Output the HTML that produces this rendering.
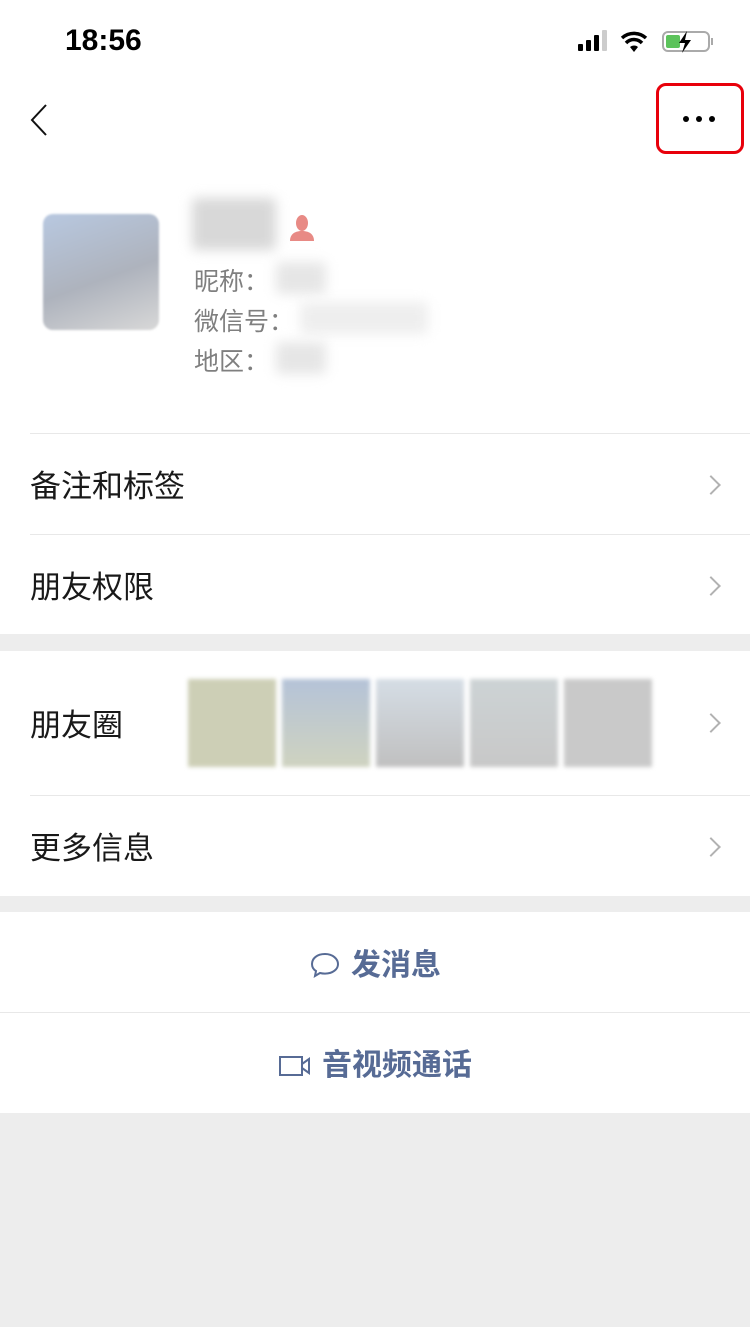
<!DOCTYPE html>
<html><head><meta charset="utf-8"><style>
*{margin:0;padding:0;box-sizing:border-box}
body{width:750px;height:1327px;background:#ededed;font-family:"Liberation Sans","Noto Sans CJK SC",sans-serif;position:relative;overflow:hidden}
.w{position:absolute;left:0;width:750px;background:#fff}
.t{position:absolute;font-size:31px;color:#191919;left:30px}
.chev{position:absolute;right:32px;width:14px;height:14px;border-top:2px solid #b2b2b2;border-right:2px solid #b2b2b2;transform:rotate(45deg)}
.line{position:absolute;left:30px;right:0;height:1px;background:#e8e8e8}
.g{position:absolute;font-size:25px;color:#7f7f7f;left:194px}
.blur{position:absolute;background:#e6e6e6;filter:blur(6px);border-radius:4px}
.ph{position:absolute;top:679px;width:88px;height:88px;filter:blur(2px)}
.b{position:absolute;left:0;width:750px;text-align:center;font-size:30px;font-weight:bold;color:#576b95}
</style></head><body>
<div class="w" style="top:0;height:634px"></div>
<div style="position:absolute;left:65px;top:24px;font-size:30px;font-weight:bold;color:#000">18:56</div>
<svg style="position:absolute;left:578px;top:30px" width="136" height="24">
<rect x="0" y="14" width="5" height="7" rx="1"/><rect x="8" y="10" width="5" height="11" rx="1"/><rect x="16" y="5" width="5" height="16" rx="1"/><rect x="24" y="0" width="5" height="21" rx="1" fill="#ccc"/>
<path d="M44 8a18 18 0 0 1 24 0M48 13a11 11 0 0 1 16 0" stroke="#000" stroke-width="3.5" fill="none"/><path d="M52 17l4 5 4-5a6 6 0 0 0-8 0z"/>
<rect x="85" y="2" width="46" height="19" rx="5" fill="none" stroke="#aaa" stroke-width="2"/><rect x="88" y="5" width="14" height="13" rx="2" fill="#5cc35b"/><path d="M109 1l-8 12h6l-3 10 9-13h-6z"/><rect x="133" y="8" width="2" height="7" fill="#aaa"/>
</svg>
<svg style="position:absolute;left:28px;top:103px" width="22" height="34"><path d="M18 2L4 17l14 15" stroke="#111" stroke-width="2" fill="none"/></svg>
<div style="position:absolute;left:656px;top:83px;width:88px;height:71px;border:3px solid #e8000b;border-radius:10px"></div>
<svg style="position:absolute;left:682px;top:114px" width="36" height="10"><circle cx="4" cy="5" r="3"/><circle cx="17" cy="5" r="3"/><circle cx="30" cy="5" r="3"/></svg>
<div style="position:absolute;left:43px;top:214px;width:116px;height:116px;border-radius:10px;background:linear-gradient(160deg,#b8c8e0,#aeb3bd 55%,#d8d8d8);filter:blur(1px)"></div>
<div class="blur" style="left:192px;top:198px;width:84px;height:52px;background:#d8d8d8"></div>
<svg style="position:absolute;left:288px;top:212px" width="30" height="30"><ellipse cx="14" cy="11" rx="6" ry="8" fill="#e88a85"/><path d="M2 29c0-7 5-10 12-10s12 3 12 10z" fill="#e88a85"/></svg>
<div class="g" style="top:262px">昵称：</div>
<div class="g" style="top:302px">微信号：</div>
<div class="g" style="top:342px">地区：</div>
<div class="blur" style="left:276px;top:262px;width:50px;height:32px"></div>
<div class="blur" style="left:300px;top:302px;width:128px;height:32px;background:#eee"></div>
<div class="blur" style="left:276px;top:342px;width:50px;height:32px"></div>
<div class="line" style="top:433px"></div>
<div class="t" style="top:461px">备注和标签</div><div class="chev" style="top:478px"></div>
<div class="line" style="top:534px"></div>
<div class="t" style="top:562px">朋友权限</div><div class="chev" style="top:579px"></div>
<div class="w" style="top:651px;height:245px"></div>
<div class="t" style="top:700px">朋友圈</div><div class="chev" style="top:716px"></div>
<div class="ph" style="left:188px;background:#cdcfb6"></div>
<div class="ph" style="left:282px;background:linear-gradient(#b5c3d8,#cfd3c0)"></div>
<div class="ph" style="left:376px;background:linear-gradient(#d5dde5,#c0c0c0)"></div>
<div class="ph" style="left:470px;background:linear-gradient(#cdd3d5,#c8c8c8)"></div>
<div class="ph" style="left:564px;background:#c9c9c9"></div>
<div class="line" style="top:795px"></div>
<div class="t" style="top:823px">更多信息</div><div class="chev" style="top:840px"></div>
<div class="w" style="top:912px;height:201px"></div>
<div class="line" style="top:1012px;left:0"></div>
<div class="b" style="top:940px"><svg style="vertical-align:-4px;margin-right:10px" width="32" height="28"><path d="M16 3C8 3 3 7.5 3 13c0 3 1.5 5.5 4 7l-1 5 5-3c1.5.4 3 .6 5 .6 8 0 13-4.5 13-9.5S24 3 16 3z" fill="none" stroke="#576b95" stroke-width="2"/></svg>发消息</div>
<div class="b" style="top:1040px"><svg style="vertical-align:-2px;margin-right:10px" width="34" height="22"><rect x="2" y="2" width="22" height="18" fill="none" stroke="#576b95" stroke-width="2"/><path d="M24 9l7-5v14l-7-5" fill="none" stroke="#576b95" stroke-width="2"/></svg>音视频通话</div>
</body></html>
